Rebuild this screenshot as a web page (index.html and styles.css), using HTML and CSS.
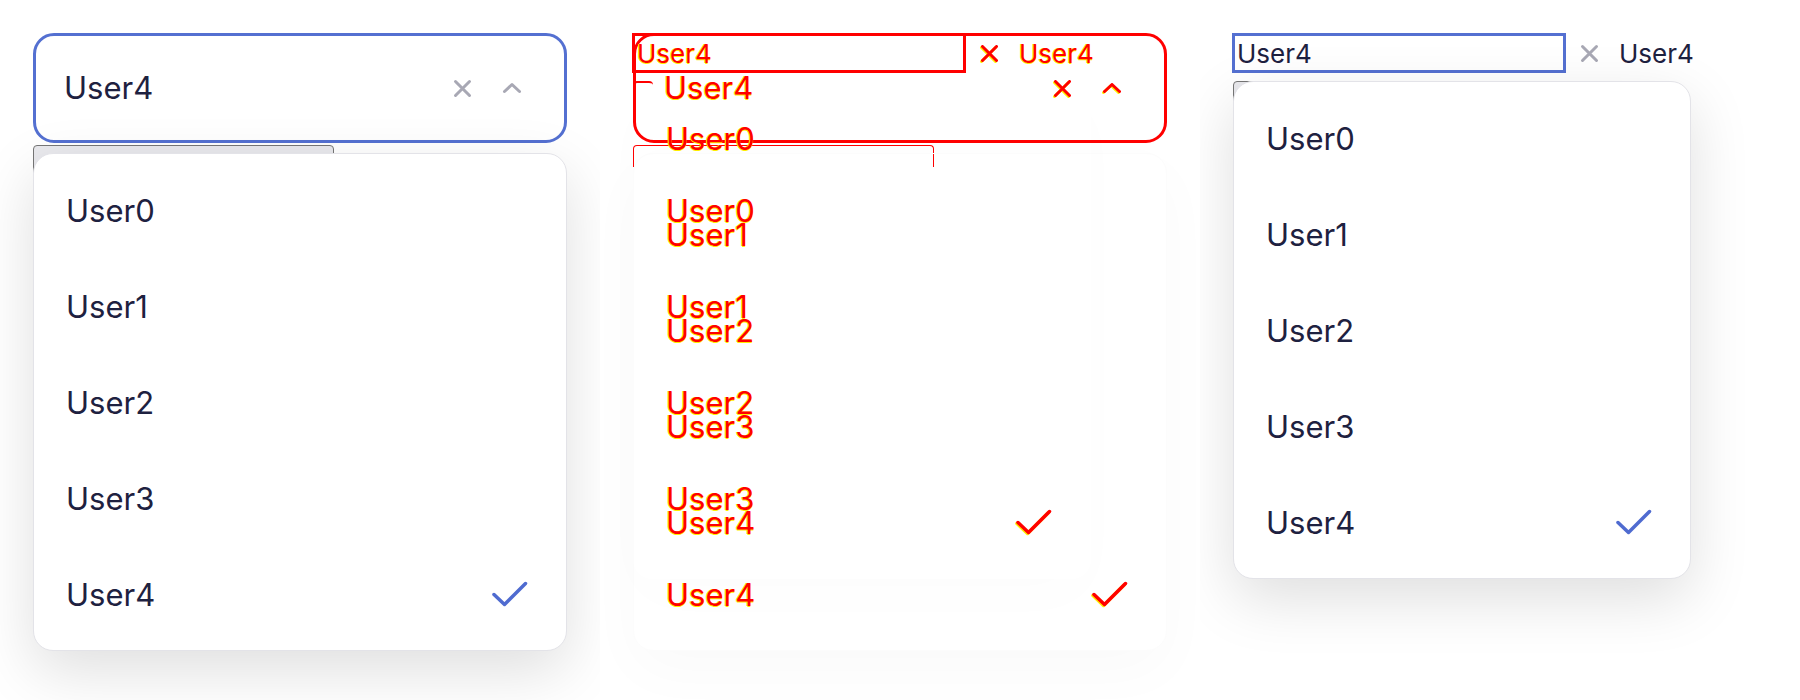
FILE: index.html
```html
<!DOCTYPE html>
<html lang="en">
<head>
<meta charset="utf-8">
<title>Combobox visual diff</title>
<link rel="stylesheet" href="styles.css">
</head>
<body>
<div class="stage">

  <section class="panel expected">
    <div class="cb">
      <div class="cb-box">
        <span class="cb-value">User4</span>
        <span class="cb-icons">
          <svg class="x-icon" viewBox="0 0 19 19"><path d="M2.5 2.5L16.5 16.5M16.5 2.5L2.5 16.5"/></svg>
          <svg class="chev" viewBox="0 0 20 12"><path d="M2.5 9.5L10 2.5L17.5 9.5"/></svg>
        </span>
      </div>
      <div class="pop">
        <div class="native"></div>
        <ul class="list">
          <li>User0</li>
          <li>User1</li>
          <li>User2</li>
          <li>User3</li>
          <li>User4<svg class="check" viewBox="0 0 36 26"><path d="M2 13.5L12.5 23.5L33.5 2.5"/></svg></li>
        </ul>
      </div>
    </div>
  </section>

  <section class="panel diff">
    <div class="overlay">
      <div class="cb layer">
        <div class="cb-box">
          <span class="cb-value">User4</span>
          <span class="cb-icons">
            <svg class="x-icon" viewBox="0 0 19 19"><path d="M2.5 2.5L16.5 16.5M16.5 2.5L2.5 16.5"/></svg>
            <svg class="chev" viewBox="0 0 20 12"><path d="M2.5 9.5L10 2.5L17.5 9.5"/></svg>
          </span>
        </div>
        <div class="pop">
          <div class="native"></div>
          <ul class="list">
            <li>User0</li>
            <li>User1</li>
            <li>User2</li>
            <li>User3</li>
            <li>User4<svg class="check" viewBox="0 0 36 26"><path d="M2 13.5L12.5 23.5L33.5 2.5"/></svg></li>
          </ul>
        </div>
      </div>
      <div class="ac layer">
        <div class="ac-row">
          <div class="ac-input">User4</div>
          <svg class="x-icon" viewBox="0 0 19 19"><path d="M2.5 2.5L16.5 16.5M16.5 2.5L2.5 16.5"/></svg>
          <span class="ac-text">User4</span>
        </div>
        <div class="pop">
          <div class="native"></div>
          <ul class="list">
            <li>User0</li>
            <li>User1</li>
            <li>User2</li>
            <li>User3</li>
            <li>User4<svg class="check" viewBox="0 0 36 26"><path d="M2 13.5L12.5 23.5L33.5 2.5"/></svg></li>
          </ul>
        </div>
      </div>
    </div>
  </section>

  <section class="panel actual">
    <div class="ac">
      <div class="ac-row">
        <div class="ac-input">User4</div>
        <svg class="x-icon" viewBox="0 0 19 19"><path d="M2.5 2.5L16.5 16.5M16.5 2.5L2.5 16.5"/></svg>
        <span class="ac-text">User4</span>
      </div>
      <div class="pop">
        <div class="native"></div>
        <ul class="list">
          <li>User0</li>
          <li>User1</li>
          <li>User2</li>
          <li>User3</li>
          <li>User4<svg class="check" viewBox="0 0 36 26"><path d="M2 13.5L12.5 23.5L33.5 2.5"/></svg></li>
        </ul>
      </div>
    </div>
  </section>

</div>
</body>
</html>
```

FILE: styles.css
```css
* { box-sizing: border-box; }

html, body {
  margin: 0;
  background: #ffffff;
}

body {
  font-family: Inter, "Noto Sans", "Liberation Sans", sans-serif;
  color: #1e2140;
}

.stage {
  display: grid;
  grid-template-columns: repeat(3, 600px);
  height: 700px;
}

.panel {
  height: 700px;
  overflow: hidden;
  padding: 33px 0 0 33px;
  background: #ffffff;
}

/* shared svg strokes */
svg path {
  fill: none;
  stroke: currentColor;
  stroke-linecap: round;
  stroke-linejoin: round;
}

.x-icon {
  width: 19px;
  height: 19px;
  color: #a8a8b4;
  flex: none;
}
.x-icon path { stroke-width: 3; }

.chev {
  width: 20px;
  height: 12px;
  color: #a8a8b4;
  flex: none;
}
.chev path { stroke-width: 3; }

.check {
  width: 36px;
  height: 26px;
  color: #4f6bd0;
  flex: none;
}
.check path { stroke-width: 3.5; }

/* ---------- expected combobox ---------- */
.cb {
  width: 534px;
  display: flex;
  flex-direction: column;
}

.cb-box {
  height: 110px;
  border: 3px solid #5470d1;
  border-radius: 21px;
  background: #ffffff;
  display: flex;
  align-items: center;
  padding: 0 42px 0 28px;
  font-size: 31px;
  line-height: 36px;
}

.cb-value { flex: 1; }

.cb-icons {
  display: flex;
  align-items: center;
  gap: 30px;
}

.pop {
  display: grid;
  margin-top: 2px;
}
.pop > * { grid-area: 1 / 1; }

.native {
  width: 301px;
  height: 40px;
  align-self: start;
  background: #e9e9ed;
  border: 1px solid #767676;
  border-radius: 4px 4px 0 0;
}

.list {
  list-style: none;
  margin: 8px 0 0;
  padding: 8px 0;
  width: 534px;
  background: #ffffff;
  border: 1px solid #e3e3e8;
  border-radius: 20px;
  box-shadow: 0 20px 60px rgba(0, 0, 0, 0.13);
}

.list li {
  height: 96px;
  display: flex;
  align-items: center;
  justify-content: space-between;
  padding: 0 38px 0 32px;
  font-size: 31px;
}

/* ---------- actual (broken) combobox ---------- */
.ac {
  display: flex;
  flex-direction: column;
}

.ac-row {
  display: flex;
  align-items: center;
  height: 40px;
  margin-left: -1px;
}

.ac-input {
  width: 334px;
  height: 40px;
  border: 3.5px solid #5470d1;
  background: #ffffff;
  padding: 0 2px;
  display: flex;
  align-items: center;
  font-size: 26px;
}

.ac-row .x-icon {
  margin-left: 13px;
  width: 21px;
  height: 19px;
}

.ac-text {
  margin-left: 19px;
  font-size: 26px;
}

.ac .pop { margin-top: 8px; }
.ac .list {
  margin-top: 0;
  width: 458px;
}
.ac .native { width: 300px; }

/* ---------- diff panel ---------- */
.overlay { display: grid; }
.overlay > .layer { grid-area: 1 / 1; }

.diff .cb-box,
.diff .ac-input,
.diff .list,
.diff .native {
  background: transparent;
}

.diff .cb-box,
.diff .ac-input {
  border-color: #ff0000;
}

.diff .cb-value,
.diff .ac-input,
.diff .ac-text,
.diff .list li {
  color: #ff0000;
  text-shadow: -1px 0 #ffee00, 0 1px #ffee00;
}

.diff svg {
  color: #ff0000;
  filter: drop-shadow(-1px 1px 0 #ffee00);
}

.diff .list {
  border-color: #fcfcfc;
  box-shadow: 0 20px 60px rgba(0, 0, 0, 0.025);
}

.diff .ac .list {
  border-color: transparent;
  box-shadow: 0 20px 60px rgba(0, 0, 0, 0.01);
}

.diff .cb .native {
  height: 22px;
  border-color: #ff0000;
  border-bottom: none;
  border-width: 1.5px;
}

.diff .ac .native {
  width: 20px;
  height: 20px;
  border: 2px solid #ff0000;
  border-right: none;
  border-bottom: none;
}
```
